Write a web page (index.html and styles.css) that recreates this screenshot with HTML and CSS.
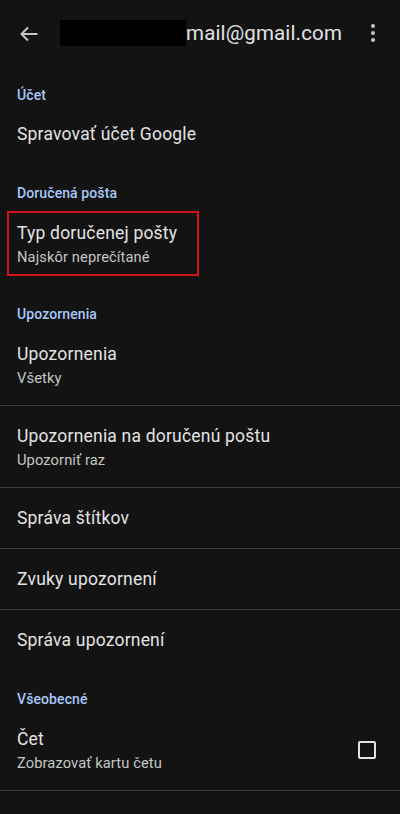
FILE: index.html
```html
<!DOCTYPE html>
<html lang="sk">
<head>
<meta charset="utf-8">
<link rel="stylesheet" href="styles.css">
</head>
<body>
<div class="app">
  <header class="topbar">
    <span class="icon-btn back">
      <svg width="24" height="24" viewBox="0 0 24 24"><path d="M20.5 12H4.5M11 5.5L4.5 12l6.5 6.5" fill="none" stroke="#c4c7c5" stroke-width="2"/></svg>
    </span>
    <div class="account">
      <span class="redact"></span><span class="email">mail@gmail.com</span>
    </div>
    <span class="icon-btn more">
      <svg width="24" height="24" viewBox="0 0 24 24"><circle cx="12" cy="5" r="2" fill="#c4c7c5"/><circle cx="12" cy="12" r="2" fill="#c4c7c5"/><circle cx="12" cy="19" r="2" fill="#c4c7c5"/></svg>
    </span>
  </header>

  <div class="section-title">Účet</div>
  <div class="item single first"><div class="title">Spravovať účet Google</div></div>

  <div class="section-title">Doručená pošta</div>
  <div class="item double">
    <div class="highlight">
      <div class="title">Typ doručenej pošty</div>
      <div class="sub">Najskôr neprečítané</div>
    </div>
  </div>

  <div class="section-title">Upozornenia</div>
  <div class="item double divided">
    <div class="title">Upozornenia</div>
    <div class="sub">Všetky</div>
  </div>
  <div class="item double divided">
    <div class="title">Upozornenia na doručenú poštu</div>
    <div class="sub">Upozorniť raz</div>
  </div>
  <div class="item single divided"><div class="title">Správa štítkov</div></div>
  <div class="item single divided"><div class="title">Zvuky upozornení</div></div>
  <div class="item single"><div class="title">Správa upozornení</div></div>

  <div class="section-title">Všeobecné</div>
  <div class="item double divided with-control">
    <div class="texts">
      <div class="title">Čet</div>
      <div class="sub">Zobrazovať kartu četu</div>
    </div>
    <span class="checkbox"></span>
  </div>
</div>
</body>
</html>
```
FILE: styles.css
```css
html, body {
  margin: 0;
  padding: 0;
  background: #131313;
}
body {
  font-family: Roboto, "Noto Sans", "Liberation Sans", sans-serif;
  color: #e3e3e3;
}
.app {
  width: 400px;
  min-height: 814px;
  background: #131313;
}
.topbar {
  height: 66px;
  display: flex;
  align-items: center;
}
.icon-btn {
  display: flex;
  align-items: center;
  justify-content: center;
  width: 24px;
  height: 24px;
}
.back {
  margin-left: 17px;
  margin-top: 1px;
}
.account {
  display: flex;
  align-items: center;
  margin-left: 19px;
  flex: 1;
}
.redact {
  display: block;
  width: 126px;
  height: 26px;
  background: #000;
}
.email {
  font-size: 20.5px;
  line-height: 26px;
  color: #e3e3e3;
  letter-spacing: 0.15px;
}
.more {
  margin-right: 15px;
}
.section-title {
  padding: 19px 17px 0;
  font-size: 14px;
  line-height: 20px;
  font-weight: 500;
  color: #a8c7fa;
  letter-spacing: 0.1px;
}
.item {
  padding: 18px 17px;
}
.item.first {
  padding-top: 17px;
}
.item.double.divided {
  padding-bottom: 17px;
}
.item.divided {
  border-bottom: 1px solid #3a3a3a;
}
.title {
  font-size: 17.5px;
  line-height: 24px;
  color: #e3e3e3;
  letter-spacing: 0.2px;
}
.sub {
  margin-top: 2px;
  font-size: 14.7px;
  line-height: 20px;
  color: #c4c7c5;
  letter-spacing: 0.1px;
}
.highlight {
  width: 192px;
  box-sizing: border-box;
  margin: -10px 0 -9px -10px;
  padding: 8px 8px 7px 8px;
  border: 2px solid #d0141c;
}
.with-control {
  display: flex;
  align-items: center;
}
.texts {
  flex: 1;
}
.checkbox {
  width: 18px;
  height: 18px;
  box-sizing: border-box;
  border: 2px solid #e3e3e3;
  border-radius: 2px;
  margin-right: 7px;
}
```
